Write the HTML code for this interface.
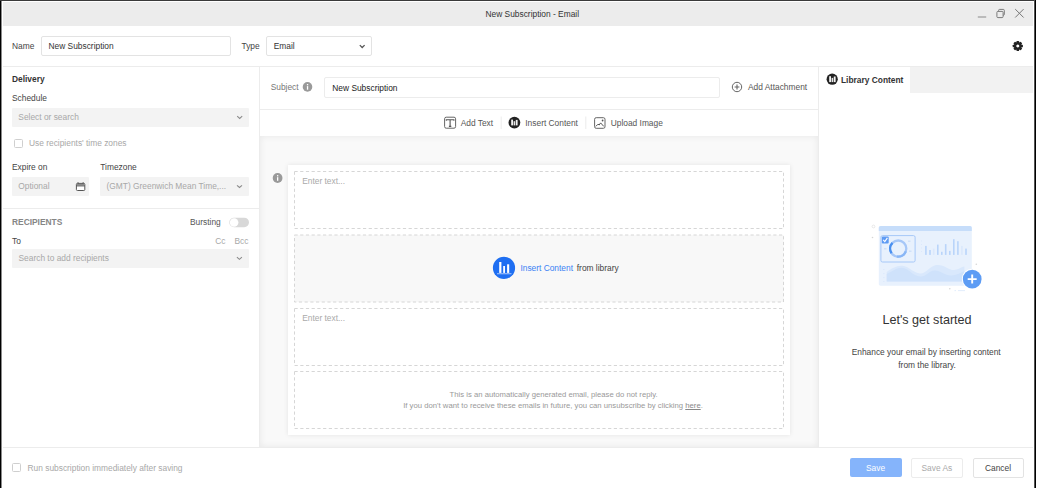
<!DOCTYPE html>
<html><head><meta charset="utf-8">
<style>
html,body{margin:0;padding:0;}
body{width:1038px;height:488px;position:relative;overflow:hidden;background:#fff;font-family:"Liberation Sans",sans-serif;font-size:8.4px;color:#444;}
.a{position:absolute;}
.t{position:absolute;white-space:nowrap;line-height:1;}
.box{position:absolute;box-sizing:border-box;}
.inp{position:absolute;box-sizing:border-box;border:1px solid #e3e3e3;border-radius:2px;background:#fff;}
.sel{position:absolute;box-sizing:border-box;background:#f3f3f3;border-radius:1px;}
.ph{color:#a8a8a8;}
.chev{position:absolute;width:4px;height:4px;border-right:1px solid #888;border-bottom:1px solid #888;transform:rotate(45deg);}
.hl{position:absolute;height:1px;background:#ececec;}
.vl{position:absolute;width:1px;background:#ececec;}
.dash{position:absolute;box-sizing:border-box;border:1px dashed #dadada;}
</style></head>
<body>
<!-- window frame -->
<div class="a" style="left:0;top:0;width:1px;height:488px;background:#000"></div>
<div class="a" style="left:1px;top:0;width:1px;height:488px;background:#8a8a8a"></div>
<div class="a" style="left:0;top:0;width:1036px;height:1px;background:#3a3a3a"></div>
<div class="a" style="left:1034px;top:0;width:1px;height:488px;background:#555"></div>
<div class="a" style="left:1035px;top:0;width:1px;height:488px;background:#000"></div>

<!-- title bar -->
<div class="a" style="left:3px;top:2px;width:1030px;height:24px;background:#ececec"></div>
<div class="t" style="left:485.5px;top:9.9px;color:#333">New Subscription - Email</div>

<!-- header row -->
<div class="t" style="left:12px;top:41.9px;color:#444">Name</div>
<div class="inp" style="left:41px;top:36px;width:190px;height:20px"></div>
<div class="t" style="left:48.5px;top:41.9px;color:#333">New Subscription</div>
<div class="t" style="left:241.5px;top:41.9px;color:#444">Type</div>
<div class="inp" style="left:266px;top:36px;width:106px;height:20px"></div>
<div class="t" style="left:273.7px;top:41.9px;color:#333">Email</div>

<div class="hl" style="left:3px;top:66px;width:1030px"></div>


<!-- left panel -->
<div class="t" style="left:12px;top:75.4px;font-weight:bold;color:#333">Delivery</div>
<div class="t" style="left:12px;top:93.9px;color:#444">Schedule</div>
<div class="sel" style="left:12px;top:108px;width:237px;height:19px"></div>
<div class="t ph" style="left:18.3px;top:112.5px;">Select or search</div>

<div class="box" style="left:14px;top:139.4px;width:9px;height:9px;border:1px solid #cfcfcf;border-radius:1.5px"></div>
<div class="t ph" style="left:29px;top:139.3px">Use recipients' time zones</div>

<div class="t" style="left:12px;top:162.9px">Expire on</div>
<div class="t" style="left:100.3px;top:162.9px">Timezone</div>
<div class="sel" style="left:12px;top:176.5px;width:77px;height:19.5px"></div>
<div class="t ph" style="left:18.3px;top:182px">Optional</div>
<div class="sel" style="left:100px;top:176.5px;width:149px;height:19.5px"></div>
<div class="t ph" style="left:106.5px;top:182px">(GMT) Greenwich Mean Time,...</div>

<div class="hl" style="left:3px;top:208px;width:256px"></div>

<div class="t" style="left:12px;top:217.9px;font-weight:bold;color:#858585">RECIPIENTS</div>
<div class="t" style="left:190px;top:217.9px;color:#555">Bursting</div>
<div class="t" style="left:12px;top:237.4px;color:#444">To</div>
<div class="t ph" style="left:215.3px;top:237.4px">Cc</div>
<div class="t ph" style="left:234.4px;top:237.4px">Bcc</div>
<div class="sel" style="left:12px;top:248.7px;width:237px;height:19px"></div>
<div class="t ph" style="left:18.5px;top:254px">Search to add recipients</div>

<svg class="a" style="left:0;top:0" width="380" height="280" viewBox="0 0 380 280"><path d="M359.80 45.10 L362.20 47.50 L364.60 45.10" fill="none" stroke="#555" stroke-width="1.3"/><path d="M237.20 116.20 L239.70 118.40 L242.20 116.20" fill="none" stroke="#8a8a8a" stroke-width="1.1"/><path d="M237.00 185.30 L239.50 187.50 L242.00 185.30" fill="none" stroke="#8a8a8a" stroke-width="1.1"/><path d="M236.90 257.10 L239.40 259.30 L241.90 257.10" fill="none" stroke="#8a8a8a" stroke-width="1.1"/></svg>
<div class="vl" style="left:259px;top:66px;height:381px"></div>

<!-- center panel -->
<div class="t" style="left:270.7px;top:83.4px;color:#777">Subject</div>
<div class="inp" style="left:324px;top:77px;width:396px;height:20.5px;border-color:#ececec"></div>
<div class="t" style="left:332.3px;top:83.6px;color:#222">New Subscription</div>
<div class="t" style="left:748px;top:83.4px;color:#555">Add Attachment</div>
<div class="hl" style="left:260px;top:109px;width:558px"></div>

<div class="t" style="left:460.7px;top:118.6px;color:#555">Add Text</div>
<div class="t" style="left:525.3px;top:118.6px;color:#555">Insert Content</div>
<div class="t" style="left:610.7px;top:118.6px;color:#555">Upload Image</div>

<div class="a" style="left:260px;top:136px;width:558px;height:311px;background:#f9f9f9;box-shadow:inset 0 0 7px rgba(0,0,0,0.075)"></div>
<div class="a" style="left:288px;top:165px;width:502px;height:270px;background:#fff;box-shadow:0 0 5px rgba(0,0,0,0.09)"></div>


<!-- center icons -->
<svg class="a" style="left:0;top:60px" width="1038" height="80" viewBox="0 60 1038 80">
  <circle cx="307.5" cy="86.9" r="4.8" fill="#9a9a9a"/>
  <rect x="306.9" y="84" width="1.3" height="1.3" fill="#fff"/>
  <rect x="306.9" y="86.1" width="1.3" height="3.6" fill="#fff"/>
  <circle cx="737" cy="87" r="4.7" fill="none" stroke="#666" stroke-width="1"/>
  <path d="M737 84.6 V89.4 M734.6 87 H739.4" stroke="#666" stroke-width="1.1"/>
  <!-- add text icon -->
  <rect x="444.6" y="117.2" width="11" height="11" rx="1.6" fill="none" stroke="#666" stroke-width="1"/>
  <path d="M446.3 120.8 V119.8 H453.9 V120.8 M450.1 119.8 V126.4 M448.9 126.4 H451.3" fill="none" stroke="#555" stroke-width="1.1"/>
  <line x1="501.2" y1="116.5" x2="501.2" y2="129" stroke="#ececec" stroke-width="1"/>
  <!-- insert content icon -->
  <circle cx="514.4" cy="122.6" r="5.9" fill="#222"/>
  <rect x="511.2" y="119.6" width="1.8" height="5.8" fill="#f2f2f2"/>
  <rect x="513.6" y="121.2" width="1.6" height="4.2" fill="#e6e6e6"/>
  <rect x="515.8" y="119.9" width="1.8" height="5.5" fill="#f2f2f2"/>
  <line x1="585.8" y1="116.5" x2="585.8" y2="129" stroke="#ececec" stroke-width="1"/>
  <!-- upload image icon -->
  <rect x="594.6" y="117.7" width="10.4" height="10.6" rx="1.6" fill="none" stroke="#666" stroke-width="1"/>
  <path d="M595.8 126.4 L598 124.2 L599.2 125 L600.6 122.9 L603.8 126.4" fill="none" stroke="#555" stroke-width="1"/>
  <circle cx="602.6" cy="120.5" r="0.9" fill="#555"/>
</svg>
<!-- left icons -->
<svg class="a" style="left:0;top:170px" width="260" height="70" viewBox="0 170 260 70">
  <rect x="76.4" y="183.4" width="8.4" height="7.1" rx="1" fill="#fff" stroke="#555" stroke-width="1"/>
  <rect x="76.9" y="183.9" width="7.4" height="1.5" fill="#8a8a8a"/>
  <line x1="76.4" y1="185.9" x2="84.8" y2="185.9" stroke="#555" stroke-width="1"/>
  <rect x="77.5" y="182.3" width="1.1" height="1.3" fill="#555"/>
  <rect x="82.6" y="182.3" width="1.1" height="1.3" fill="#555"/>
  <rect x="229.3" y="217.7" width="19.7" height="9.5" rx="4.75" fill="#d8d8d8"/>
  <circle cx="234.1" cy="222.45" r="4.3" fill="#fff"/>
</svg>
<!-- library icon -->
<svg class="a" style="left:820px;top:70px" width="20" height="20" viewBox="820 70 20 20">
  <circle cx="832.2" cy="79.2" r="5.6" fill="#222"/>
  <rect x="829.2" y="76.2" width="1.8" height="5.9" fill="#f2f2f2"/>
  <rect x="831.6" y="77.9" width="1.6" height="4.2" fill="#e6e6e6"/>
  <rect x="833.8" y="76.5" width="1.8" height="5.6" fill="#f2f2f2"/>
</svg>
<!-- card content -->
<svg class="a" style="left:270px;top:170px" width="20" height="20" viewBox="270 170 20 20">
  <circle cx="277.6" cy="178" r="5" fill="#fff"/>
  <circle cx="277.6" cy="178" r="4.9" fill="#9a9a9a"/>
  <rect x="277" y="175.1" width="1.3" height="1.3" fill="#fff"/>
  <rect x="277" y="177.2" width="1.3" height="3.6" fill="#fff"/>
</svg>
<svg class="a" style="left:288px;top:165px" width="502" height="270" viewBox="288 165 502 270"><rect x="294.5" y="171.5" width="489.0" height="57.0" fill="none" stroke="#d6d6d6" stroke-width="1" stroke-dasharray="3.2 2.5"/><rect x="294.5" y="235.0" width="489.0" height="67.0" fill="#f8f8f8" stroke="#d6d6d6" stroke-width="1" stroke-dasharray="3.2 2.5"/><rect x="294.5" y="308.5" width="489.0" height="57.0" fill="none" stroke="#d6d6d6" stroke-width="1" stroke-dasharray="3.2 2.5"/><rect x="294.5" y="371.5" width="489.0" height="57.0" fill="none" stroke="#d6d6d6" stroke-width="1" stroke-dasharray="3.2 2.5"/></svg>
<div class="t ph" style="left:302.2px;top:177px;color:#aaa">Enter text...</div>
<svg class="a" style="left:490px;top:254px" width="28" height="28" viewBox="490 254 28 28">
  <circle cx="504" cy="267.9" r="11.6" fill="#fffdf5"/>
  <circle cx="504" cy="267.9" r="11.1" fill="#1f6ff2"/>
  <rect x="499.2" y="262" width="2.2" height="10.9" fill="#fff"/>
  <rect x="503.2" y="266" width="1.8" height="6.9" fill="#fff"/>
  <rect x="507.1" y="264.3" width="2.1" height="8.6" fill="#fff"/>
  <rect x="497" y="273.4" width="14.5" height="0.8" fill="#cfe0ff"/>
</svg>
<div class="t" style="left:520.4px;top:264.2px;color:#3b82f4">Insert Content</div>
<div class="t" style="left:576.8px;top:264.2px;color:#444">from library</div>
<div class="t ph" style="left:302.2px;top:313.9px;color:#aaa">Enter text...</div>
<div class="t" style="left:449.6px;top:391px;font-size:7.7px;color:#999">This is an automatically generated email, please do not reply.</div>
<div class="t" style="left:403.2px;top:401.9px;font-size:7.72px;color:#999">If you don't want to receive these emails in future, you can unsubscribe by clicking <span style="text-decoration:underline;color:#888">here</span>.</div>
<div class="vl" style="left:818px;top:66px;height:381px"></div>

<!-- right panel -->
<div class="a" style="left:910px;top:66.5px;width:123px;height:26.5px;background:#f2f2f2"></div>
<div class="t" style="left:841px;top:76px;font-weight:bold;color:#333">Library Content</div>

<!-- illustration -->
<svg class="a" style="left:860px;top:215px" width="130" height="85" viewBox="860 215 130 85">
  <circle cx="873.5" cy="226.5" r="1.4" fill="none" stroke="#e2e2e2" stroke-width="0.8"/>
  <circle cx="872.5" cy="237.5" r="0.8" fill="#d6d6d6"/>
  <circle cx="976.3" cy="264.2" r="0.8" fill="#d6d6d6"/>
  <circle cx="949.8" cy="288.7" r="0.8" fill="#d6d6d6"/>
  <path d="M954.5 290.6 H956 M958 290.6 H965" stroke="#d7e6fb" stroke-width="0.7"/>
  <rect x="878.8" y="225.9" width="93" height="59.8" rx="1.8" fill="#e8f1fd"/>
  <path d="M878.8 231 V227.7 Q878.8 225.9 880.6 225.9 H970 Q971.8 225.9 971.8 227.7 V231 Z" fill="#c6ddfa"/>
  <rect x="880.9" y="235.6" width="34.2" height="26.4" rx="1.6" fill="none" stroke="#a6c8f8" stroke-width="1"/>
  <path d="M884 248.8 H886.5 M908 241.2 H910.5 M909 251.2 H911.5" stroke="#bcd4f8" stroke-width="0.8"/>
<circle cx="898.2" cy="248.6" r="8.1" fill="none" stroke="#a6c7f8" stroke-width="2.3"/>
  <path d="M905.81 251.37 A8.1 8.1 0 0 1 896.79 256.58" fill="none" stroke="#88b6f6" stroke-width="2.3"/>
  <path d="M891.57 253.25 A8.1 8.1 0 0 1 892.47 242.87" fill="none" stroke="#4a90f0" stroke-width="2.3"/>
  <rect x="881.8" y="236.5" width="6.9" height="6.9" rx="1" fill="#5e9bf4"/>
  <path d="M883.2 239.9 L884.8 241.6 L887.4 237.9" fill="none" stroke="#fff" stroke-width="1.1"/>
  <path d="M921 241 H922 M921 244.5 H922 M921 248 H922 M921 251.5 H922" stroke="#d3e3fb" stroke-width="0.6"/>
  <rect x="925.1" y="245.9" width="1.6" height="9.0" fill="#b9d4fa"/><rect x="929.2" y="250.0" width="1.6" height="4.9" fill="#b9d4fa"/><rect x="932.9" y="248.6" width="1.6" height="6.3" fill="#dbe8fc"/><rect x="937.0" y="244.6" width="1.6" height="10.3" fill="#b9d4fa"/><rect x="941.0" y="251.8" width="1.6" height="3.1" fill="#b9d4fa"/><rect x="944.9" y="244.1" width="1.6" height="10.8" fill="#b9d4fa"/><rect x="949.0" y="250.9" width="1.6" height="4.0" fill="#b9d4fa"/><rect x="953.0" y="239.2" width="1.6" height="15.7" fill="#b9d4fa"/><rect x="957.1" y="241.2" width="1.6" height="13.7" fill="#b9d4fa"/><rect x="961.1" y="245.9" width="1.6" height="9.0" fill="#dbe8fc"/><rect x="965.2" y="248.6" width="1.6" height="6.3" fill="#b9d4fa"/>
  <path d="M886.7 281.5 V272 C892 268 898 264.5 904 266 C910 267.5 914 273 920 273.5 C926 274 930 266 936 265 C944 264 948 270 954 270 C958 270 961 267 964.4 266.5 V281.5 Z" fill="#d9e8fc"/>
  <path d="M886.7 281.5 V274 C893 271 899 266 905 268.5 C911 271 914 276.5 921 276.5 C927 276.5 929 270 935 270.5 C942 271 945 276 952 275.5 C957 275 961 272.5 964.4 271 V281.5 Z" fill="#cfe2fb"/>
  <path d="M883.2 269.5 H884.4 M883.2 273.6 H884.4 M883.2 277.6 H884.4 M883.2 281.5 H884.4" stroke="#d3e3fb" stroke-width="0.6"/>
  <circle cx="972.2" cy="279.1" r="10.4" fill="#fff"/>
  <circle cx="972.2" cy="279.1" r="9.4" fill="#5d9cf4"/>
  <path d="M972.2 274.6 V283.6 M967.7 279.1 H976.7" stroke="#fff" stroke-width="1.9"/>
</svg>
<div class="t" style="left:882.4px;top:313.5px;font-size:12.6px;color:#333">Let's get started</div>
<div class="t" style="left:851.7px;top:348.2px;color:#444">Enhance your email by inserting content</div>
<div class="t" style="left:898.3px;top:360.6px;color:#444">from the library.</div>

<!-- footer -->
<div class="hl" style="left:3px;top:447px;width:1030px"></div>
<div class="box" style="left:12.3px;top:463.3px;width:9px;height:9px;border:1px solid #cfcfcf;border-radius:1.5px"></div>
<div class="t ph" style="left:27.5px;top:464px">Run subscription immediately after saving</div>
<div class="box" style="left:849.6px;top:458.2px;width:52.2px;height:19.3px;background:#85b4fb;border-radius:2px"></div>
<div class="t" style="left:866px;top:464px;color:#fff">Save</div>
<div class="box" style="left:911.3px;top:458.2px;width:51.5px;height:19.5px;border:1px solid #ececec;border-radius:2px"></div>
<div class="t" style="left:921.5px;top:464px;color:#aaa">Save As</div>
<div class="box" style="left:972.5px;top:458.2px;width:51.2px;height:19.5px;border:1px solid #e3e3e3;border-radius:2px"></div>
<div class="t" style="left:985px;top:464px;color:#444">Cancel</div>

<!-- window controls -->
<svg class="a" style="left:0;top:0" width="1038" height="60" viewBox="0 0 1038 60">
  <line x1="977.8" y1="17" x2="986.2" y2="17" stroke="#8a8a8a" stroke-width="1"/>
  <rect x="996.9" y="11.4" width="6.2" height="6.2" rx="1" fill="none" stroke="#7a7a7a" stroke-width="1"/>
  <path d="M998.6 11.2 V10.4 Q998.6 9.4 999.6 9.4 H1003.3 Q1004.3 9.4 1004.3 10.4 V14.3 Q1004.3 15.3 1003.3 15.3 H1003.1" fill="none" stroke="#7a7a7a" stroke-width="1"/>
  <path d="M1015.2 9.1 L1023.6 17.5 M1023.6 9.1 L1015.2 17.5" stroke="#777" stroke-width="1"/>
  <g transform="translate(1017.8 46)" fill="#222"><rect x="-1.3" y="-5.1" width="2.6" height="3" rx="0.6" transform="rotate(0)"/><rect x="-1.3" y="-5.1" width="2.6" height="3" rx="0.6" transform="rotate(45)"/><rect x="-1.3" y="-5.1" width="2.6" height="3" rx="0.6" transform="rotate(90)"/><rect x="-1.3" y="-5.1" width="2.6" height="3" rx="0.6" transform="rotate(135)"/><rect x="-1.3" y="-5.1" width="2.6" height="3" rx="0.6" transform="rotate(180)"/><rect x="-1.3" y="-5.1" width="2.6" height="3" rx="0.6" transform="rotate(225)"/><rect x="-1.3" y="-5.1" width="2.6" height="3" rx="0.6" transform="rotate(270)"/><rect x="-1.3" y="-5.1" width="2.6" height="3" rx="0.6" transform="rotate(315)"/><path d="M0 -3.9 A3.9 3.9 0 1 1 -0.001 -3.9 Z M0 -1.5 A1.5 1.5 0 1 0 0.001 -1.5 Z" fill-rule="evenodd"/></g>
</svg>
</body></html>
